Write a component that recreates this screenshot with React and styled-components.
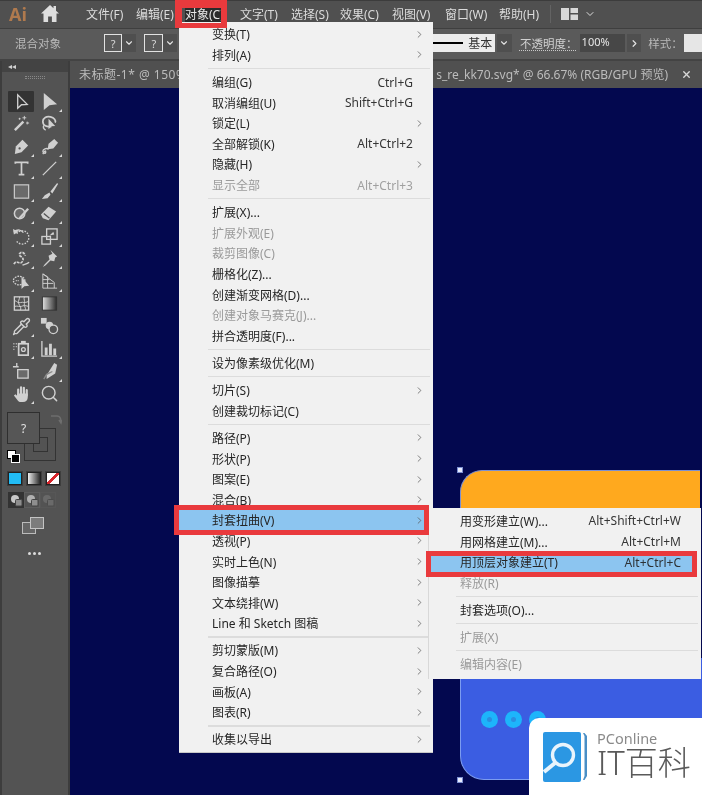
import React from 'react';
import styled, { createGlobalStyle } from 'styled-components';
import { Search, Pipette, ChevronRight, ChevronDown, X } from 'lucide-react';

const GlobalStyle = createGlobalStyle`
  html, body {
    margin: 0;
    padding: 0;
    background: #03084f;
  }
  * {
    box-sizing: border-box;
  }
`;

const Page = styled.div`
  position: relative;
  width: 702px;
  height: 795px;
  overflow: hidden;
  display: flex;
  flex-direction: column;
  background: #535353;
  font-family: "Noto Sans", "Noto Sans CJK SC", sans-serif;
  font-size: 12px;
  filter: blur(0.4px);
`;

/* top menu bar */
const MenuBar = styled.div`
  height: 29px;
  flex: none;
  display: flex;
  align-items: center;
  padding: 0 0 2px 9px;
  background: #505050;
  border-top: 1px solid #3c3c3c;
  border-bottom: 1px solid #3f3f3f;
  color: #dcdcdc;
`;

const AiLogo = styled.span`
  width: 32px;
  font-family: "Open Sans", sans-serif;
  font-size: 18px;
  font-weight: 700;
  color: #b07a4e;
`;

const HomeIcon = styled.svg`
  width: 18px;
  height: 17px;
  margin-right: 27px;
  fill: #dedede;
`;

const MenuTitle = styled.span`
  width: ${(p) => p.$w}px;
  white-space: nowrap;
`;

const ActiveTitle = styled(MenuTitle)`
  background: linear-gradient(#2b2b2b, #2b2b2b) no-repeat 0 0 / 38px 100%;
  color: #e8e8e8;
`;

const BarDivider = styled.span`
  width: 1px;
  height: 18px;
  margin: 0 10px 0 0;
  background: #636363;
`;

const LayoutIcon = styled.svg`
  width: 17px;
  height: 12px;
  margin-right: 6px;
  fill: #d8d8d8;
`;

/* control bar */
const ControlBar = styled.div`
  height: 32px;
  flex: none;
  display: flex;
  align-items: center;
  padding: 0 0 2px 15px;
  background: #5a5a5a;
  border-bottom: 2px solid #434343;
  color: #b9b9b9;
`;

const ControlLabel = styled.span`
  width: ${(p) => p.$w}px;
  font-size: 11.5px;
  white-space: nowrap;
`;

const OpacityLabel = styled(ControlLabel)`
  color: #d0d0d0;
  text-decoration: underline dotted #c8c8c8;
  text-underline-offset: 2px;
`;

const QuestionBox = styled.span`
  width: 19px;
  height: 18px;
  display: flex;
  align-items: center;
  justify-content: center;
  border: 1.5px solid #e2e2e2;
  color: #d8d8d8;
  font-size: 11px;
`;

const ChevronBox = styled.span`
  width: ${(p) => p.$w || 14}px;
  height: 18px;
  margin-right: ${(p) => p.$mr || 0}px;
  display: flex;
  align-items: center;
  justify-content: center;
  background: #4f4f4f;
  color: #e2e2e2;
`;

const StrokePreview = styled.div`
  width: 64px;
  height: 18px;
  margin-right: 2px;
  display: flex;
  align-items: center;
  gap: 5px;
  background: #ececec;
  color: #333;
`;

const StrokeLine = styled.span`
  width: 32px;
  height: 2.5px;
  background: #000;
`;

const OpacityInput = styled.span`
  width: 46px;
  height: 18px;
  margin-right: 2px;
  padding-left: 2px;
  line-height: 16px;
  font-size: 11px;
  background: #474747;
  color: #e6e6e6;
`;

const StyleSwatch = styled.span`
  width: 18px;
  height: 18px;
  background: #e6e6e6;
`;

/* tools + document */
const Body = styled.div`
  flex: 1;
  display: flex;
  min-height: 0;
`;

const ToolPanel = styled.div`
  width: 70px;
  flex: none;
  display: flex;
  flex-direction: column;
  background: #535353;
  border-left: 2px solid #3d3d3d;
  border-right: 2px solid #3d3d3d;
`;

const PanelHead = styled.div`
  height: 11px;
  flex: none;
  padding-left: 6px;
  font-size: 8px;
  line-height: 9px;
  color: #cfcfcf;
  background: #434343;
`;

const PanelGrip = styled.div`
  height: 3px;
  width: 20px;
  margin: 4px 0 11px 23px;
  border-top: 1px dotted #888;
  border-bottom: 1px dotted #888;
`;

const ToolGrid = styled.div`
  display: grid;
  grid-template-columns: 28px 28px;
  grid-auto-rows: 22.5px;
  padding: 0 0 0 5px;
`;

const ToolCell = styled.div`
  position: relative;
  display: flex;
  align-items: center;
  justify-content: center;
  margin: 1px 1px;
  border-radius: 1px;
  color: #d0d0d0;
  background: ${(p) => (p.$active ? '#333333' : 'transparent')};

  svg {
    width: 19px;
    height: 19px;
    flex: none;
  }

  &::after {
    content: '';
    display: ${(p) => (p.$corner ? 'block' : 'none')};
    position: absolute;
    right: 0;
    bottom: 0;
    border-left: 3px solid transparent;
    border-bottom: 3px solid #d8d8d8;
  }
`;

const ColorWell = styled.div`
  position: relative;
  height: 52px;
  margin: 6px 0 0 5px;
`;

const FillBox = styled.div`
  position: absolute;
  left: 0;
  top: 1px;
  width: 33px;
  height: 32px;
  z-index: 1;
  display: flex;
  align-items: center;
  justify-content: center;
  background: #565656;
  border: 1px solid #2f2f2f;
  color: #e0e0e0;
  font-size: 12px;
`;

const StrokeBox = styled.div`
  position: absolute;
  left: 17px;
  top: 17px;
  width: 32px;
  height: 33px;
  background: #535353;
  border: 1.5px solid #333;
`;

const StrokeInner = styled.div`
  position: absolute;
  left: 26px;
  top: 26px;
  width: 15px;
  height: 15px;
  border: 1.5px solid #333;
`;

const SwapIcon = styled.svg`
  position: absolute;
  left: 43px;
  top: 2px;
  width: 12px;
  height: 12px;
  fill: none;
  stroke: #6e6e6e;
  stroke-width: 1.5;
`;

const DefaultSquare = styled.span`
  position: absolute;
  width: 9px;
  height: 9px;
  left: ${(p) => p.$x}px;
  top: ${(p) => p.$y}px;
  z-index: 2;
  background: ${(p) => p.$c};
  border: 1px solid ${(p) => (p.$c === '#fff' ? '#000' : '#fff')};
`;

const SwatchRow = styled.div`
  display: flex;
  gap: 5px;
  margin: 9px 0 0 6px;
`;

const Swatch = styled.span`
  width: 14px;
  height: 13px;
  border: 1px solid #222;
  box-shadow: 0 0 0 1px #3e3e3e;
  background: ${(p) => p.$bg};
`;

const ModeRow = styled.div`
  display: flex;
  margin: 7px 0 0 6px;
`;

const ModeButton = styled.span`
  width: 16px;
  height: 16px;
  display: flex;
  align-items: center;
  justify-content: center;
  background: ${(p) => (p.$active ? '#333' : 'transparent')};
  border: 1px solid ${(p) => (p.$active ? '#333' : '#5e5e5e')};
  opacity: ${(p) => p.$dim || 1};
`;

const ScreenIcon = styled.svg`
  display: block;
  width: 22px;
  height: 17px;
  margin: 9px 0 0 20px;
`;

const MoreDots = styled.div`
  margin: 18px 0 0 26px;
  display: flex;
  gap: 2px;
`;

const Dot = styled.span`
  width: 3px;
  height: 3px;
  border-radius: 50%;
  background: #dcdcdc;
`;

const Workspace = styled.div`
  flex: 1;
  min-width: 0;
  display: flex;
  flex-direction: column;
`;

const TabBar = styled.div`
  height: 27px;
  flex: none;
  display: flex;
  align-items: center;
  padding-bottom: 1px;
  background: #505050;
  color: #bcbcbc;
`;

const TabLabel = styled.span`
  padding-left: 9px;
  letter-spacing: 0.5px;
  white-space: nowrap;
`;

const TabRight = styled.span`
  margin-left: auto;
  display: flex;
  align-items: center;
  white-space: nowrap;
`;

const TabClose = styled.span`
  display: flex;
  margin: 0 10px 0 13px;
  color: #d8d8d8;
`;

/* document canvas, artwork placed freely */
const Canvas = styled.div`
  position: relative;
  flex: 1;
  background: #03084f;
`;

const OrangeCard = styled.div`
  position: absolute;
  left: 390px;
  top: 382px;
  width: 240px;
  height: 70px;
  background: #ffa91e;
  border: 1px solid #7c8fd0;
  border-right: none;
  border-radius: 22px 0 0 0;
`;

const BlueCard = styled.div`
  position: absolute;
  left: 390px;
  top: 570px;
  width: 242px;
  height: 122px;
  background: #3b5de2;
  border-left: 1px solid #7c9cf0;
  border-bottom: 1px solid #7c9cf0;
  border-radius: 0 0 0 24px;
`;

const Handle = styled.span`
  position: absolute;
  left: ${(p) => p.$x}px;
  top: ${(p) => p.$y}px;
  width: 6px;
  height: 6px;
  background: #e8ecff;
  border: 1px solid #7c8fd0;
`;

const CardDot = styled.span`
  position: absolute;
  left: ${(p) => p.$x}px;
  top: 623px;
  width: 17px;
  height: 17px;
  display: flex;
  align-items: center;
  justify-content: center;
  border-radius: 50%;
  background: #1db5fb;

  &::after {
    content: '';
    width: 5px;
    height: 5px;
    border-radius: 50%;
    background: #2a8ee2;
  }
`;

/* dropdown menus */
const Dropdown = styled.div`
  position: absolute;
  left: 179px;
  top: 22px;
  width: 254px;
  padding: 2px 0 2.7px;
  z-index: 2;
  background: #f1f1f1;
  border-bottom: 1px solid #c8c8c8;
  color: #262626;
`;

const Flyout = styled.div`
  position: absolute;
  left: 428px;
  top: 508px;
  width: 273px;
  padding: 2.7px 0 4.5px;
  z-index: 3;
  background: #f1f1f1;
  border-left: 1px solid #d8d8d8;
  color: #262626;
`;

const Row = styled.div`
  height: 20.6px;
  display: flex;
  align-items: center;
  padding-left: ${(p) => p.$pl}px;
  padding-right: ${(p) => p.$pr}px;
  white-space: nowrap;
  color: ${(p) => (p.$off ? '#9a9a9a' : '#262626')};
  background: ${(p) =>
    p.$on ? 'linear-gradient(#8cc5f0, #8cc5f0) no-repeat 0 0 / calc(100% - 4px) 100%' : 'transparent'};
`;

const RowLabel = styled.span`
  flex: 1;
`;

const Shortcut = styled.span`
  opacity: 0.92;
`;

const Arrow = styled.span`
  width: 12px;
  flex: none;
  display: flex;
  justify-content: center;
  color: #555;
`;

const Separator = styled.div`
  height: 1.5px;
  margin: 2.55px ${(p) => p.$mr}px 2.55px ${(p) => p.$ml}px;
  background: #dcdcdc;
`;

const RedFrame = styled.div`
  position: absolute;
  left: ${(p) => p.$x}px;
  top: ${(p) => p.$y}px;
  width: ${(p) => p.$w}px;
  height: ${(p) => p.$h}px;
  z-index: 4;
  border-style: solid;
  border-color: #e93a3d;
  border-width: ${(p) => p.$b};
`;

/* watermark in the corner */
const Watermark = styled.div`
  position: absolute;
  right: 0;
  bottom: 0;
  width: 173px;
  height: 77px;
  z-index: 5;
  display: flex;
  padding: 14px 0 0 14px;
  background: #fff;
  border-radius: 10px 0 0 0;
`;

const WatermarkIcon = styled.svg`
  width: 44px;
  height: 50px;
  margin-right: 10px;
  flex: none;
`;

const WatermarkText = styled.div`
  display: flex;
  flex-direction: column;
`;

const WatermarkSmall = styled.span`
  font-size: 14.5px;
  line-height: 14px;
  margin-top: -1px;
  color: #8a8a8a;
`;

const WatermarkBig = styled.span`
  font-size: 33px;
  line-height: 36px;
  font-weight: 300;
  color: #5a5a5a;
  white-space: nowrap;
`;

const titles = [
  ['文件(F)', 50],
  ['编辑(E)', 49],
  ['对象(C)', 55, true],
  ['文字(T)', 51],
  ['选择(S)', 49],
  ['效果(C)', 52],
  ['视图(V)', 53],
  ['窗口(W)', 54],
  ['帮助(H)', 51],
];

const menu = [
  { t: '变换(T)', sub: 1 },
  { t: '排列(A)', sub: 1 },
  'sep',
  { t: '编组(G)', k: 'Ctrl+G' },
  { t: '取消编组(U)', k: 'Shift+Ctrl+G' },
  { t: '锁定(L)', sub: 1 },
  { t: '全部解锁(K)', k: 'Alt+Ctrl+2' },
  { t: '隐藏(H)', sub: 1 },
  { t: '显示全部', k: 'Alt+Ctrl+3', off: 1 },
  'sep',
  { t: '扩展(X)...' },
  { t: '扩展外观(E)', off: 1 },
  { t: '裁剪图像(C)', off: 1 },
  { t: '栅格化(Z)...' },
  { t: '创建渐变网格(D)...' },
  { t: '创建对象马赛克(J)...', off: 1 },
  { t: '拼合透明度(F)...' },
  'sep',
  { t: '设为像素级优化(M)' },
  'sep',
  { t: '切片(S)', sub: 1 },
  { t: '创建裁切标记(C)' },
  'sep',
  { t: '路径(P)', sub: 1 },
  { t: '形状(P)', sub: 1 },
  { t: '图案(E)', sub: 1 },
  { t: '混合(B)', sub: 1 },
  { t: '封套扭曲(V)', sub: 1, on: 1 },
  { t: '透视(P)', sub: 1 },
  { t: '实时上色(N)', sub: 1 },
  { t: '图像描摹', sub: 1 },
  { t: '文本绕排(W)', sub: 1 },
  { t: 'Line 和 Sketch 图稿', sub: 1 },
  'sep',
  { t: '剪切蒙版(M)', sub: 1 },
  { t: '复合路径(O)', sub: 1 },
  { t: '画板(A)', sub: 1 },
  { t: '图表(R)', sub: 1 },
  'sep',
  { t: '收集以导出', sub: 1 },
];

const envelope = [
  { t: '用变形建立(W)...', k: 'Alt+Shift+Ctrl+W' },
  { t: '用网格建立(M)...', k: 'Alt+Ctrl+M' },
  { t: '用顶层对象建立(T)', k: 'Alt+Ctrl+C', on: 1 },
  { t: '释放(R)', off: 1 },
  'sep',
  { t: '封套选项(O)...' },
  'sep',
  { t: '扩展(X)', off: 1 },
  'sep',
  { t: '编辑内容(E)', off: 1 },
];

const Svg = ({ children }) => (
  <svg viewBox="0 0 20 20" fill="none" stroke="currentColor" strokeWidth="1.4">
    {children}
  </svg>
);

const F = { fill: 'currentColor', stroke: 'none' };

const tools = [
  { active: 1, icon: <Svg><path d="M6 3v14l4-3.6 6-.4z" /></Svg> },
  { corner: 1, icon: <Svg><path {...F} d="M4 1v18l6-5 8-1z" /></Svg> },
  { icon: <Svg><path d="M3 17l9-9" strokeWidth="2.6" /><path d="M13 2v4M11 4h4M16 8v3M15 9.5h3M8 4v2M7 5h2" strokeWidth="1" /></Svg> },
  { icon: <Svg><path d="M12 13c-5 1-9-1-9-5s4-6 8-5 6 4 5 6" strokeWidth="1.8" /><path {...F} d="M9 5v11l3-3 4-.5z" /><path d="M4 12c-1 2 0 4 2 5" /></Svg> },
  { corner: 1, icon: <Svg><path {...F} d="M3 18l1-8 7-7 6 6-7 7z" /><circle cx="8" cy="12" r="1.2" fill="#535353" stroke="none" /></Svg> },
  { corner: 1, icon: <Svg><path {...F} d="M8 13l1-6 6-5 4 4-5 6z" /><path d="M9 13c-2-2-6 0-6 2s3 3 3 1-1-2-3 2" /></Svg> },
  { corner: 1, icon: <Svg><path d="M3.5 5V3.5h13V5M10 3.5V16M7 16.5h6" strokeWidth="1.8" /></Svg> },
  { corner: 1, icon: <Svg><path d="M3 17L17 3" /></Svg> },
  { corner: 1, icon: <Svg><rect x="2.5" y="3" width="15" height="14" fill="#6a6a6a" stroke="#c8c8c8" strokeWidth="1.3" /></Svg> },
  { corner: 1, icon: <Svg><path {...F} d="M18 1l-7 9 2 2 6-10zM10 11l-5 3-3 4 6-1 3-3.5z" /></Svg> },
  { corner: 1, icon: <Svg><circle cx="8" cy="10" r="5.5" fill="#6a6a6a" strokeWidth="1.6" /><path d="M8 15l9-10" strokeWidth="2.4" /></Svg> },
  { corner: 1, icon: <Svg><path {...F} d="M1 11l8-8 8 5-8 9-6-2z" /><path d="M4 10l6 5" stroke="#535353" /></Svg> },
  { corner: 1, icon: <Svg><path d="M5 7a7 7 0 1 1 0 8" strokeDasharray="1.6 1.4" /><path d="M2 5c4-3 8-2 10 1" /><path {...F} d="M1 2l1 6 5-3z" /></Svg> },
  { corner: 1, icon: <Svg><rect x="2" y="10" width="9" height="8" /><rect x="7" y="2" width="11" height="11" /><path {...F} d="M10 9l4-4 1 3z" /></Svg> },
  { corner: 1, icon: <Svg><path d="M2 16c3-6 6 2 9-3s-5-5-3-8 5-1 6 2" strokeWidth="1.8" strokeDasharray="3 1" /><path d="M11 17c2-1 5-1 7-3" /></Svg> },
  { corner: 1, icon: <Svg><path {...F} d="M11 1l7 7-2 1-1 4-4-1-5 5-3 2 2-3 5-5-1-4 4-2z" /></Svg> },
  { corner: 1, icon: <Svg><ellipse cx="7.5" cy="9" rx="6" ry="4.5" strokeDasharray="1.8 1" /><path {...F} d="M10 5v13l3-3 5-.5z" /><path d="M4 9h3" strokeDasharray="1 1" /></Svg> },
  { corner: 1, icon: <Svg><path d="M3 2v15h15M3 2l5 3v12M3 2l12 9v6M3 8h7M3 12h11" strokeWidth="1" /></Svg> },
  { icon: <Svg><rect x="2.5" y="3" width="15" height="14" /><path d="M3 7c3 1 3 3 6 2s4 1 8-1M8 3c0 3-2 4-1 7s3 3 2 7M13 3c-1 3 1 4 0 7s2 4 1 7M3 13c3-1 5 1 7 0s4-1 7 0" strokeWidth="1" /></Svg> },
  { icon: <Svg><defs><linearGradient id="gt" x1="0" x2="1" y1="0" y2="0"><stop offset="0" stopColor="#e0e0e0" /><stop offset="1" stopColor="#2c2c2c" /></linearGradient></defs><rect x="2.5" y="3" width="15" height="14" fill="url(#gt)" stroke="#333" strokeWidth="1" /></Svg> },
  { corner: 1, icon: <Pipette strokeWidth={1.8} /> },
  { icon: <Svg><rect x="1" y="1" width="6" height="6" {...F} /><circle cx="10" cy="9" r="4" {...F} /><circle cx="14" cy="13" r="4.5" fill="#535353" /></Svg> },
  { corner: 1, icon: <Svg><rect x="7" y="5" width="10" height="12" strokeWidth="1.8" /><rect x="9.5" y="2" width="5" height="3" {...F} /><circle cx="12" cy="11" r="2" /><path d="M1.5 5h1M4 5h1M1.5 8h1M4 8h1M1.5 11h1" strokeWidth="1.4" /></Svg> },
  { corner: 1, icon: <Svg><path d="M2 2v16h16" /><path {...F} d="M5 9h3v8H5zM9.5 5h3v12h-3zM14 10h3v7h-3z" /></Svg> },
  { icon: <Svg><path d="M5 1v4M1 5h6" /><path d="M6 8h11v9H6z" fill="#6a6a6a" /></Svg> },
  { corner: 1, icon: <Svg><path {...F} d="M15 1l3 2-2 9-9 6 0-4z" /><path d="M4 18l3-5 6-3" stroke="#888" /></Svg> },
  { corner: 1, icon: <Svg><path d="M6.5 12V6M9.5 11V3.5M12.5 11V4M15.5 12V6.5" strokeWidth="2.3" strokeLinecap="round" /><path {...F} d="M5.4 10h11.2v4c0 3-2 5-5 5H9.5c-2 0-3-1-4-2.5L2 12l1.6-1.2 1.8 1.6z" /></Svg> },
  { icon: <Search strokeWidth={1.8} /> },
];

const Swatches = () => (
  <SwatchRow>
    <Swatch $bg="#22bdf6" />
    <Swatch $bg="linear-gradient(90deg, #ededed, #2a2a2a)" />
    <Swatch $bg="linear-gradient(135deg, #fff 42%, #d8262c 42%, #d8262c 58%, #fff 58%)" />
  </SwatchRow>
);

const ModeIcon = ({ c }) => (
  <svg width="13" height="13" viewBox="0 0 13 13">
    <circle cx="5" cy="5" r="4" fill={c} />
    <rect x="5.5" y="5.5" width="6.5" height="6.5" rx="1" fill="#8e8e8e" stroke="#444" />
  </svg>
);

const MenuRows = ({ items, pl, sepL, sepR, kr }) =>
  items.map((it, i) =>
    it === 'sep' ? (
      <Separator key={i} $ml={sepL} $mr={sepR} />
    ) : (
      <Row key={i} $pl={pl} $pr={kr} $off={it.off} $on={it.on}>
        <RowLabel>{it.t}</RowLabel>
        {it.k && <Shortcut>{it.k}</Shortcut>}
        {it.sub && (
          <Arrow>
            <ChevronRight size={11} strokeWidth={1.6} />
          </Arrow>
        )}
        {items === menu && !it.sub && <Arrow />}
      </Row>
    ),
  );

const App = () => {
  return (
    <Page>
      <GlobalStyle />
      <MenuBar>
        <AiLogo>Ai</AiLogo>
        <HomeIcon viewBox="0 0 18 17">
          <path d="M9 0L0 8.5h2.5V17h4.6v-5.5h3.8V17h4.6V8.5H18l-3-2.8V1h-2.5v2.3z" />
        </HomeIcon>
        {titles.map(([t, w, active]) =>
          active ? (
            <ActiveTitle key={t} $w={w}>{t}</ActiveTitle>
          ) : (
            <MenuTitle key={t} $w={w}>{t}</MenuTitle>
          ),
        )}
        <BarDivider />
        <LayoutIcon viewBox="0 0 17 12">
          <path d="M0 0h8v12H0zM9.5 0H17v5H9.5zM9.5 6.5H17V12H9.5z" />
        </LayoutIcon>
        <ChevronDown size={12} strokeWidth={2} />
      </MenuBar>

      <ControlBar>
        <ControlLabel $w={89}>混合对象</ControlLabel>
        <QuestionBox>?</QuestionBox>
        <ChevronBox $mr={8}><ChevronDown size={10} strokeWidth={2.6} /></ChevronBox>
        <QuestionBox>?</QuestionBox>
        <ChevronBox $mr={254}><ChevronDown size={10} strokeWidth={2.6} /></ChevronBox>
        <StrokePreview>
          <StrokeLine />
          基本
        </StrokePreview>
        <ChevronBox $w={15} $mr={8}><ChevronDown size={10} strokeWidth={2.6} /></ChevronBox>
        <OpacityLabel $w={60}>不透明度：</OpacityLabel>
        <OpacityInput>100%</OpacityInput>
        <ChevronBox $w={14} $mr={7}><ChevronRight size={11} strokeWidth={2.6} /></ChevronBox>
        <ControlLabel $w={36}>样式：</ControlLabel>
        <StyleSwatch />
      </ControlBar>

      <Body>
        <ToolPanel>
          <PanelHead>◂◂</PanelHead>
          <PanelGrip />
          <ToolGrid>
            {tools.map((tool, i) => (
              <ToolCell key={i} $active={tool.active} $corner={tool.corner}>
                {tool.icon}
              </ToolCell>
            ))}
          </ToolGrid>
          <ColorWell>
            <FillBox>?</FillBox>
            <StrokeBox />
            <StrokeInner />
            <SwapIcon viewBox="0 0 12 12">
              <path d="M1 3h6c3 0 4 2 4 6M9 7l2 3 1-3" />
            </SwapIcon>
            <DefaultSquare $x={0} $y={39} $c="#fff" />
            <DefaultSquare $x={4} $y={43} $c="#000" />
          </ColorWell>
          <Swatches />
          <ModeRow>
            <ModeButton $active><ModeIcon c="#c8c8c8" /></ModeButton>
            <ModeButton><ModeIcon c="#b0b0b0" /></ModeButton>
            <ModeButton $dim={0.4}><ModeIcon c="#8a8a8a" /></ModeButton>
          </ModeRow>
          <ScreenIcon viewBox="0 0 22 17">
            <rect x="0.5" y="5.5" width="13" height="11" fill="#666" stroke="#bbb" />
            <rect x="8.5" y="0.5" width="13" height="11" fill="#7c7c7c" stroke="#c4c4c4" />
          </ScreenIcon>
          <MoreDots>
            <Dot />
            <Dot />
            <Dot />
          </MoreDots>
        </ToolPanel>

        <Workspace>
          <TabBar>
            <TabLabel>未标题-1* @ 150%</TabLabel>
            <TabRight>
              s_re_kk70.svg* @ 66.67% (RGB/GPU 预览)
              <TabClose><X size={11} strokeWidth={3} /></TabClose>
            </TabRight>
          </TabBar>
          <Canvas>
            <OrangeCard />
            <BlueCard />
            <Handle $x={387} $y={379} />
            <Handle $x={387} $y={689} />
            <CardDot $x={411} />
            <CardDot $x={435} />
            <CardDot $x={459} />
          </Canvas>
        </Workspace>
      </Body>

      <Dropdown>
        <MenuRows items={menu} pl={33} sepL={29} sepR={3} kr={8} />
      </Dropdown>
      <Flyout>
        <MenuRows items={envelope} pl={31} sepL={27} sepR={3} kr={20} />
      </Flyout>

      <RedFrame $x={175} $y={0} $w={52} $h={28} $b="8px 6px 5px 7px" />
      <RedFrame $x={174} $y={505} $w={255} $h={30} $b="5px" />
      <RedFrame $x={426} $y={551} $w={271} $h={26} $b="5px" />

      <Watermark>
        <WatermarkIcon viewBox="0 0 44 50">
          <rect x="0" y="0" width="38" height="50" rx="2" fill="#2b97e3" />
          <path d="M40 1h1.5L44 4v40l-2.5 4H40l1.5-4V4z" fill="#4a8fc6" />
          <circle cx="20" cy="23" r="10.5" fill="none" stroke="#e9f4fc" strokeWidth="3.4" />
          <path d="M12 31L1 40" stroke="#e9f4fc" strokeWidth="4" />
        </WatermarkIcon>
        <WatermarkText>
          <WatermarkSmall>PConline</WatermarkSmall>
          <WatermarkBig>IT百科</WatermarkBig>
        </WatermarkText>
      </Watermark>
    </Page>
  );
};

export default App;
